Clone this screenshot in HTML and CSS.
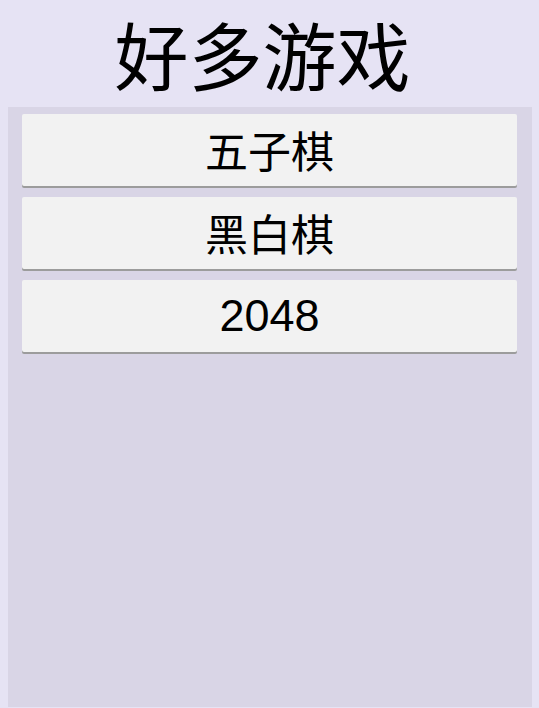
FILE: index.html
```html
<!DOCTYPE html>
<html lang="zh">
<head>
<meta charset="utf-8">
<title>好多游戏</title>
<link rel="stylesheet" href="styles.css">
</head>
<body>
<h1 class="title">好多游戏</h1>
<div class="panel">
  <div class="game-btn">五子棋</div>
  <div class="game-btn">黑白棋</div>
  <div class="game-btn num">2048</div>
</div>
</body>
</html>
```
FILE: styles.css
```css
html, body {
  margin: 0;
  padding: 0;
}
body {
  background: #e6e3f4;
  font-family: "Liberation Sans", "Noto Sans CJK SC", sans-serif;
  height: 708px;
  overflow: hidden;
}
.title {
  margin: 0;
  height: 107px;
  display: flex;
  align-items: center;
  justify-content: center;
  font-family: "Noto Sans CJK SC", sans-serif;
  font-weight: 400;
  font-size: 74px;
  line-height: 1.3;
  color: #000;
  padding: 0 14px 1px 0;
  box-sizing: border-box;
}
.panel {
  margin: 0 7px 0 8px;
  height: 600px;
  background: #d9d5e6;
  padding: 7px 15px 0 14px;
  box-sizing: border-box;
  display: flex;
  flex-direction: column;
  gap: 11px;
}
.game-btn {
  height: 72px;
  flex: none;
  background: #f2f2f2;
  border-radius: 2px;
  box-shadow: 0 2px 0 #9c9c9c;
  display: flex;
  align-items: center;
  justify-content: center;
  font-size: 43px;
  color: #000;
  font-family: "Liberation Sans", "Noto Sans CJK SC", sans-serif;
  padding-bottom: 2px;
  box-sizing: border-box;
}
.num {
  font-size: 45px;
  padding-bottom: 0;
}
```
